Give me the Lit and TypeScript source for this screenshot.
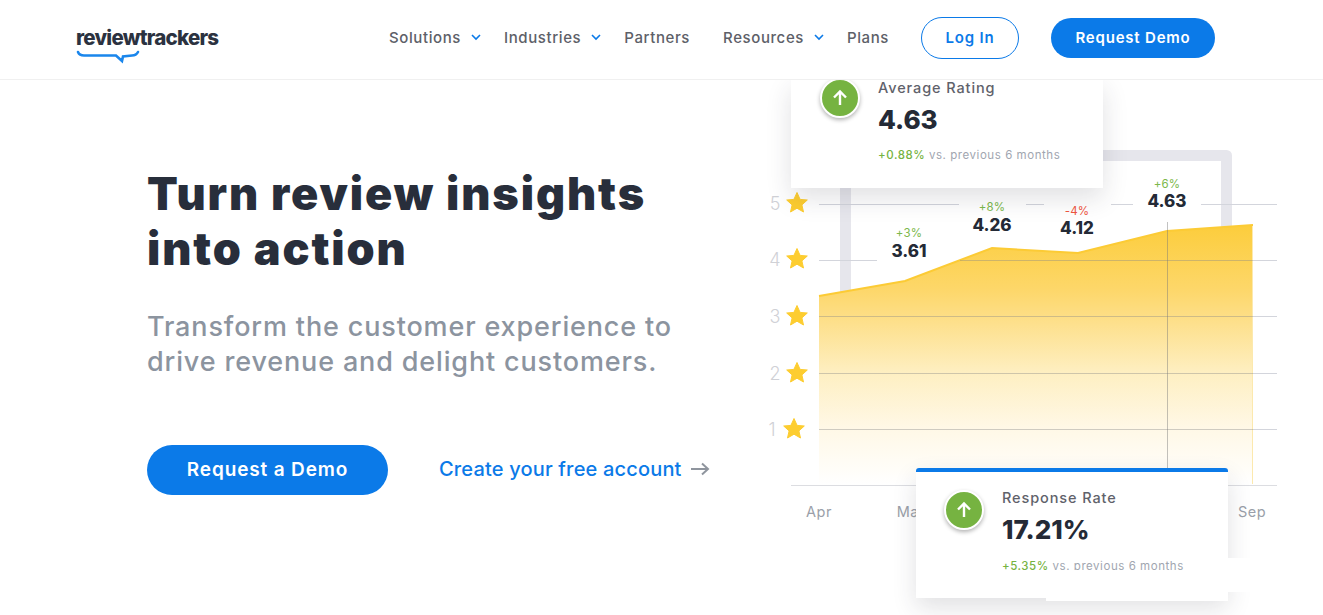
import { LitElement, html, css, svg } from 'lit';
import { customElement, property } from 'lit/decorators.js';

const FONT = css`Inter, "DejaVu Sans", sans-serif`;

const chevron = html`<svg class="chev" width="10" height="7" viewBox="0 0 10 7"><path d="M1 1l4 4 4-4" fill="none" stroke="#0b7ae8" stroke-width="1.6"/></svg>`;

const upArrow = html`<svg width="18" height="18" viewBox="0 0 18 18"><path d="M9 16V3M3 8.5L9 2.5l6 6" fill="none" stroke="#fff" stroke-width="2.4"/></svg>`;

@customElement('stat-card')
export class StatCard extends LitElement {
    @property() label = '';
    @property() value = '';
    @property() change = '';

    static styles = css`
:host {
    display: block;
    background: #fff;
    box-shadow: 0 10px 24px rgba(40, 45, 60, 0.14);
    font-family: ${FONT};
}

.badge {
    position: absolute;
    width: 36px;
    height: 36px;
    border-radius: 50%;
    background: #76b341;
    border: 2px solid #fff;
    box-shadow: 0 2px 4px rgba(0, 0, 0, 0.3);
    display: flex;
    align-items: center;
    justify-content: center;
}

.label {
    font-size: 14.5px;
    font-weight: 500;
    letter-spacing: 0.9px;
    color: #5f626b;
    line-height: 18px;
}

.value {
    font-size: 26px;
    font-weight: 800;
    color: #242a36;
    line-height: 32px;
    margin-top: 7px;
}

.sub {
    font-size: 11.5px;
    letter-spacing: 0.55px;
    color: #a1a6b0;
    line-height: 14px;
    margin-top: 13px;
}

.sub b {
    font-weight: 500;
    color: #76b341;
}
`;

    render() {
        return html`
<div class="badge" part="badge">${upArrow}</div>
<div class="label">${this.label}</div>
<div class="value">${this.value}</div>
<div class="sub" part="sub"><b>${this.change}</b> vs. previous 6 months</div>
`;
    }
}

const STAR = 'M0 -10.5 L3.1 -3.6 L10.3 -3 L4.9 1.9 L6.5 9 L0 5.2 L-6.5 9 L-4.9 1.9 L-10.3 -3 L-3.1 -3.6 Z';

const gridYs = [204, 260, 316, 373, 429];
const stars = [
    { n: 5, x: 797, y: 203 },
    { n: 4, x: 797, y: 259 },
    { n: 3, x: 797, y: 316 },
    { n: 2, x: 797, y: 373 },
    { n: 1, x: 794, y: 429 },
];
// gap: white block that breaks the grid lines behind a label
const points = [
    { c: 909, pct: '+3%', py: 237, val: '3.61', vy: 257, color: '#7cb84b', gap: [877, 240, 83, 24] },
    { c: 992, pct: '+8%', py: 211, val: '4.26', vy: 231, color: '#7cb84b', gap: [959, 180, 67, 84] },
    { c: 1077, pct: '-4%', py: 215, val: '4.12', vy: 234, color: '#f0553f', gap: [1044, 180, 67, 84] },
    { c: 1167, pct: '+6%', py: 188, val: '4.63', vy: 207, color: '#7cb84b', gap: [1133, 180, 68, 84] },
];
const months = [
    { t: 'Apr', x: 819 },
    { t: 'May', x: 912 },
    { t: 'Sep', x: 1252 },
];

@customElement('rating-chart')
export class RatingChart extends LitElement {
    static styles = css`
:host {
    display: block;
    position: relative;
    width: 563px;
    height: 535px;
    overflow: hidden;
}

svg.plot {
    display: block;
}

text {
    font-family: ${FONT};
}

.pct {
    font-size: 11.5px;
    letter-spacing: 0.2px;
    text-anchor: middle;
}

.val {
    font-size: 17px;
    font-weight: 800;
    fill: #242a36;
    text-anchor: middle;
}

.num {
    font-size: 18px;
    font-weight: 300;
    fill: #d0d1d6;
    text-anchor: middle;
}

.month {
    font-size: 14.5px;
    letter-spacing: 0.5px;
    fill: #9a9fa9;
    text-anchor: middle;
}

.ghost {
    font-size: 12px;
    fill: #e6e7ea;
}

stat-card {
    position: absolute;
    width: 312px;
    box-sizing: border-box;
}

.top {
    left: 31px;
    top: -1px;
    height: 109px;
    padding: 0 0 0 87px;
}

.top::part(badge) {
    left: 29px;
    top: -1px;
}

.top::part(sub) {
    margin-top: 12px;
}

.bottom {
    left: 156px;
    top: 388px;
    height: 130px;
    padding: 17px 0 0 86px;
    border-top: 4px solid #0b7ae8;
    border-radius: 3px 3px 0 0;
}

.bottom::part(badge) {
    left: 28px;
    top: 18px;
}

/* the reference has whited-out smudges over the lower card */
.patch {
    position: absolute;
    background: #fff;
}

.p1 {
    left: 286px;
    top: 490px;
    width: 182px;
    height: 31px;
}

.p2 {
    left: 468px;
    top: 478px;
    width: 60px;
    height: 34px;
}
`;

    render() {
        return html`
<svg class="plot" width="563" height="535" viewBox="760 80 563 535">
  <defs>
    <linearGradient id="fill" x1="0" y1="0" x2="0" y2="1">
      <stop offset="0" stop-color="#fccd3c"/>
      <stop offset="0.25" stop-color="#fdd76a"/>
      <stop offset="0.35" stop-color="#fdde85"/>
      <stop offset="0.57" stop-color="#feefc2"/>
      <stop offset="0.78" stop-color="#fff8e6"/>
      <stop offset="1" stop-color="#ffffff"/>
    </linearGradient>
  </defs>
  <path d="M845.500 310V155.500H1226.500V300" fill="none" stroke="#e6e6ec" stroke-width="11" stroke-linejoin="round"/>
  ${gridYs.map(y => svg`<line x1="819" x2="1277" y1=${y + 0.5} y2=${y + 0.5} stroke="#d3d5dc"/>`)}
  ${points.map(p => svg`<rect x=${p.gap[0]} y=${p.gap[1]} width=${p.gap[2]} height=${p.gap[3]} fill="#fff"/>`)}
  <path d="M819 296L905 281L992 248L1078 253L1167 231L1253 225V485H819Z" fill="url(#fill)"/>
  <path d="M819 296L905 281L992 248L1078 253L1167 231L1253 225" fill="none" stroke="#fccb35" stroke-width="2"/>
  <line x1="1252.500" x2="1252.500" y1="226" y2="484" stroke="#fce9ae"/>
  <line x1="960" x2="1253" y1="260.500" y2="260.500" stroke="#888" stroke-opacity="0.4"/>
  ${gridYs.slice(2).map(y => svg`<line x1="819" x2="1253" y1=${y + 0.5} y2=${y + 0.5} stroke="#888" stroke-opacity="0.4"/>`)}
  <line x1="1167.500" x2="1167.500" y1="222" y2="468" stroke="#777" stroke-opacity="0.45"/>
  <line x1="791" x2="1277" y1="485.500" y2="485.500" stroke="#dcdde1"/>
  ${stars.map(s => svg`
    <text class="num" x=${s.x - 22} y=${s.y + 7}>${s.n}</text>
    <path d=${STAR} transform="translate(${s.x} ${s.y})" fill="#fdcd30" stroke="#fdcd30" stroke-linejoin="round"/>`)}
  ${points.map(p => svg`
    <text class="pct" x=${p.c} y=${p.py} fill=${p.color}>${p.pct}</text>
    <text class="val" x=${p.c} y=${p.vy}>${p.val}</text>`)}
  ${months.map(m => svg`<text class="month" x=${m.x} y="517">${m.t}</text>`)}
  <text class="ghost" x="1278" y="582">s.</text>
</svg>
<stat-card class="top" label="Average Rating" value="4.63" change="+0.88%"></stat-card>
<stat-card class="bottom" label="Response Rate" value="17.21%" change="+5.35%"></stat-card>
<div class="patch p1"></div>
<div class="patch p2"></div>
`;
    }
}

@customElement('app-root')
export class AppRoot extends LitElement {
    static styles = css`
:host {
    display: block;
    width: 1323px;
    height: 615px;
    overflow: hidden;
    background: #fff;
    font-family: ${FONT};
}

header {
    height: 80px;
    box-sizing: border-box;
    border-bottom: 1px solid #f0f0f0;
    display: flex;
    align-items: center;
    padding: 0 108px 4px 76px;
}

.logo {
    display: flex;
    flex-direction: column;
    margin-top: 16px;
    margin-right: auto;
}

.logo span {
    font-size: 20.5px;
    font-weight: 800;
    line-height: 22px;
    letter-spacing: -0.75px;
    color: #2b3240;
}

.logo svg {
    display: block;
    margin-top: 1px;
}

nav {
    display: flex;
    align-items: center;
    gap: 23px;
    font-size: 15px;
    font-weight: 500;
    letter-spacing: 0.6px;
    color: #5d6068;
}

nav a {
    display: flex;
    align-items: center;
}

.partners {
    margin-right: 10px;
}

.chev {
    margin-left: 10px;
}

.login, .demo {
    box-sizing: border-box;
    display: flex;
    align-items: center;
    justify-content: center;
    border-radius: 21px;
    font-size: 15px;
    font-weight: 600;
    letter-spacing: 0.8px;
}

.login {
    width: 98px;
    height: 42px;
    margin-left: 32px;
    border: 1px solid #0b7ae8;
    color: #0b7ae8;
}

.demo {
    width: 164px;
    height: 40px;
    margin-left: 32px;
    background: #0b7ae8;
    color: #fff;
}

main {
    display: flex;
    height: 535px;
}

.copy {
    width: 760px;
    box-sizing: border-box;
    padding: 86px 0 0 147px;
}

h1 {
    margin: 0;
    font-size: 45px;
    font-weight: 900;
    line-height: 55px;
    letter-spacing: 1.9px;
    color: #282e3b;
}

.lede {
    margin: 33px 0 0;
    font-size: 27px;
    font-weight: 500;
    line-height: 35px;
    letter-spacing: 0.85px;
    color: #8c949f;
}

.actions {
    display: flex;
    align-items: center;
    margin-top: 66px;
}

.cta {
    box-sizing: border-box;
    width: 241px;
    height: 50px;
    padding-bottom: 2px;
    border-radius: 25px;
    background: #0b7ae8;
    color: #fff;
    font-size: 19px;
    font-weight: 600;
    letter-spacing: 0.85px;
    display: flex;
    align-items: center;
    justify-content: center;
}

.free {
    margin-left: 51px;
    margin-bottom: 2px;
    font-size: 20px;
    font-weight: 500;
    letter-spacing: 0.17px;
    color: #0b7ae8;
    display: flex;
    align-items: center;
    gap: 9px;
}
`;

    render() {
        return html`
<header>
  <div class="logo">
    <span>reviewtrackers</span>
    <svg width="64" height="14" viewBox="0 0 64 14"><path d="M2 2C3 4.500 5 5.500 8 5.500H40L46 11L47 6.500L56 5.500C59 5.500 61 4 62 2" fill="none" stroke="#1a86ec" stroke-width="2.600" stroke-linecap="round"/></svg>
  </div>
  <nav>
    <a>Solutions${chevron}</a>
    <a>Industries${chevron}</a>
    <a class="partners">Partners</a>
    <a>Resources${chevron}</a>
    <a>Plans</a>
  </nav>
  <div class="login">Log In</div>
  <div class="demo">Request Demo</div>
</header>
<main>
  <section class="copy">
    <h1>Turn review insights<br>into action</h1>
    <p class="lede">Transform the customer experience to<br>drive revenue and delight customers.</p>
    <div class="actions">
      <div class="cta">Request a Demo</div>
      <div class="free">Create your free account
        <svg width="19" height="14" viewBox="0 0 19 14"><path d="M0 7H17M11 1.500L17 7l-6 5.500" fill="none" stroke="#8f959e" stroke-width="2"/></svg>
      </div>
    </div>
  </section>
  <rating-chart></rating-chart>
</main>
`;
    }
}
